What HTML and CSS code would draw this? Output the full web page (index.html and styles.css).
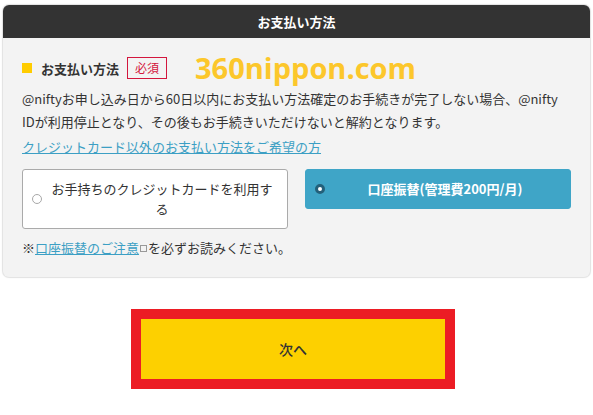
FILE: index.html
```html
<!DOCTYPE html>
<html lang="ja">
<head>
    <meta charset="utf-8"/>
    <title>お支払い方法</title>
    <link rel="stylesheet" href="styles.css">
</head>
<body>
<div class="page">
    <div class="panel">
        <div class="panel-head">お支払い方法</div>
        <div class="panel-body">
            <div class="title-row">
                <span class="mark"></span>
                <span class="title">お支払い方法</span>
                <span class="badge">必須</span>
                <span class="watermark">360nippon.com</span>
            </div>
            <p class="desc">@niftyお申し込み日から60日以内にお支払い方法確定のお手続きが完了しない場合、@nifty IDが利用停止となり、その後もお手続きいただけないと解約となります。</p>
            <a class="link" href="#">クレジットカード以外のお支払い方法をご希望の方</a>
            <div class="options">
                <label class="option">
                    <span class="radio"></span>
                    <span class="option-text">お手持ちのクレジットカードを利用する</span>
                </label>
                <label class="option selected">
                    <span class="radio"></span>
                    <span class="option-text">口座振替(管理費200円/月)</span>
                </label>
            </div>
            <p class="note">※<a class="link" href="#">口座振替のご注意</a><span class="ext"></span>を必ずお読みください。</p>
        </div>
    </div>

    <div class="next-wrap">
        <div class="next">次へ</div>
    </div>
</div>
</body>
</html>
```

FILE: styles.css
```css
body {
    margin: 0;
    padding: 0;
    background: #fff;
    font-family: "Noto Sans CJK JP", "Noto Sans", sans-serif;
    color: #333;
    font-size: 13px;
}

.page {
    padding: 5px 3px 0 3px;
}

.panel {
    background-color: #f3f3f3;
    border-radius: 6px;
    box-shadow: 0 0 1px 1px #e2e2e2;
    overflow: hidden;
}

.panel-head {
    background-color: #333;
    color: #fff;
    font-weight: bold;
    height: 33px;
    line-height: 33px;
    text-align: center;
}

.panel-body {
    padding: 18px 19px 19px 19px;
}

.title-row {
    display: flex;
    align-items: center;
    height: 24px;
}

.mark {
    width: 10px;
    height: 10px;
    background-color: #ffcc00;
    margin-right: 9px;
}

.title {
    font-weight: bold;
}

.badge {
    margin-left: 8px;
    border: 1px solid #d3163d;
    color: #d3163d;
    font-size: 12px;
    height: 20px;
    line-height: 20px;
    padding: 0 7px;
}

.watermark {
    margin-left: 28px;
    color: #fcc72b;
    font-family: "Open Sans", sans-serif;
    font-weight: bold;
    font-size: 29px;
    line-height: 24px;
}

.desc {
    margin: 7px 0 0 0;
    line-height: 23px;
}

.link {
    display: inline-block;
    color: #3c9fc4;
    text-decoration: underline;
}

.panel-body > .link {
    margin-top: 3px;
    line-height: 22px;
}

.options {
    display: flex;
    align-items: flex-start;
    gap: 17px;
    margin-top: 11px;
}

.option {
    flex: 1;
    display: flex;
    align-items: center;
    position: relative;
    min-height: 38px;
    box-sizing: border-box;
    padding: 9px 14px 9px 28px;
    background-color: #fff;
    border: 1px solid #aaa;
    border-radius: 3px;
    line-height: 20px;
}

.option-text {
    flex: 1;
    text-align: center;
}

.radio {
    position: absolute;
    left: 9px;
    top: 50%;
    margin-top: -5px;
    width: 8px;
    height: 8px;
    border: 1px solid #a8a8a8;
    border-radius: 50%;
    background: #fff;
}

.option.selected {
    background-color: #3fa5c7;
    border-color: #3fa5c7;
    color: #fff;
    font-weight: bold;
}

.option.selected .radio {
    width: 4px;
    height: 4px;
    border: 3px solid #23607a;
    background: #fff;
}

.note {
    margin: 9px 0 0 0;
    line-height: 20px;
}

.note .link {
    color: #3c9fc4;
}

.ext {
    display: inline-block;
    width: 5px;
    height: 5px;
    border: 1px solid #999;
    margin: 0 1px;
    vertical-align: 1px;
}

.next-wrap {
    display: flex;
    justify-content: center;
    padding: 32px 7px 0 0;
}

.next {
    width: 304px;
    height: 60px;
    line-height: 60px;
    border: 10px solid #ec1c24;
    background-color: #fdd000;
    text-align: center;
    font-size: 14px;
    font-weight: 500;
    color: #333;
}
```
